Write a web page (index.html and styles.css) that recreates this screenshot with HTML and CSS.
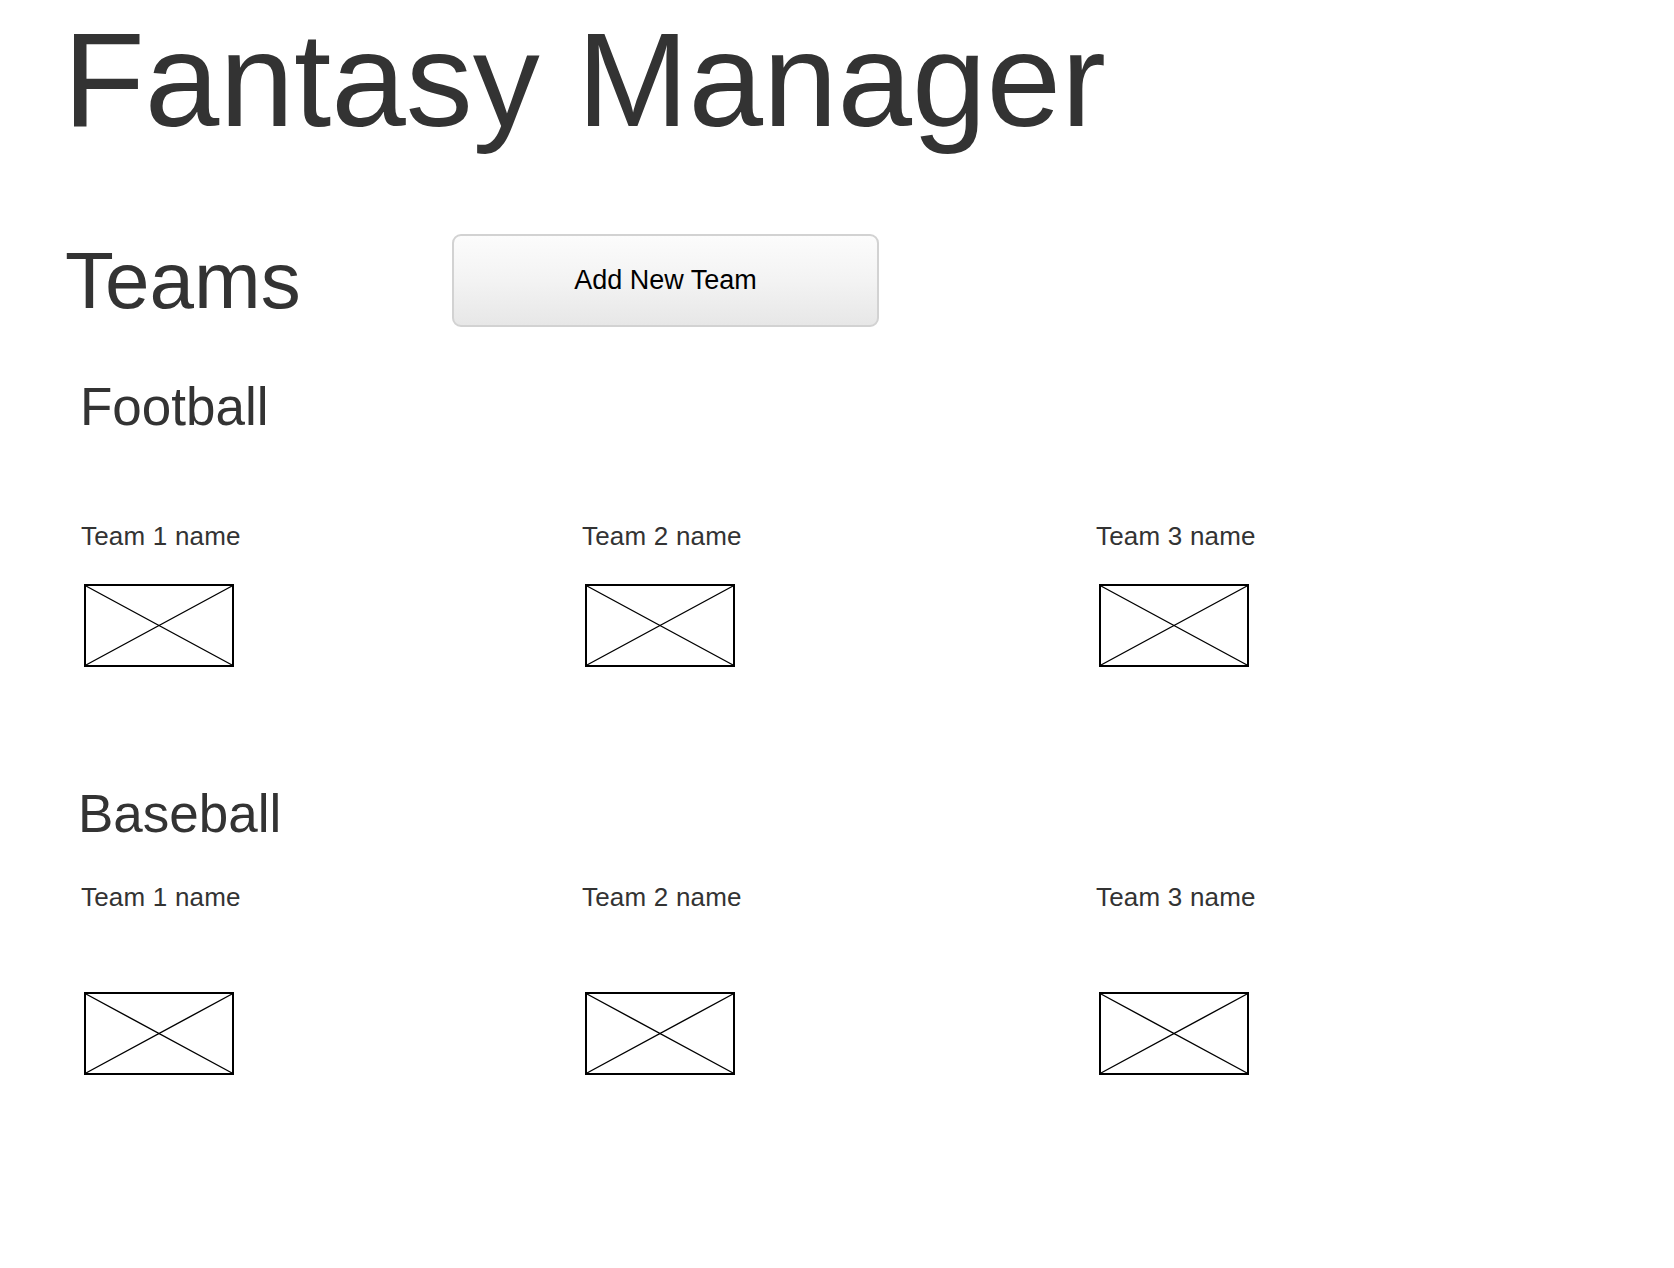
FILE: index.html
```html
<!DOCTYPE html>
<html lang="en">
<head>
<meta charset="utf-8">
<title>Fantasy Manager</title>
<link rel="stylesheet" href="styles.css">
</head>
<body>
<div class="page">
  <h1 class="app-title">Fantasy Manager</h1>

  <div class="teams-bar">
    <h2 class="teams-title">Teams</h2>
    <button class="add-btn" type="button">Add New Team</button>
  </div>

  <section class="sport sport-football">
    <h3 class="sport-title">Football</h3>
    <div class="team-grid">
      <div class="team">
        <div class="team-name">Team 1 name</div>
        <svg class="ph" width="150" height="83" viewBox="0 0 150 83"><rect x="1" y="1" width="148" height="81" fill="#fff" stroke="#000" stroke-width="2"/><path d="M2 2L148 81M148 2L2 81" stroke="#000" stroke-width="1.4" fill="none"/></svg>
      </div>
      <div class="team">
        <div class="team-name">Team 2 name</div>
        <svg class="ph" width="150" height="83" viewBox="0 0 150 83"><rect x="1" y="1" width="148" height="81" fill="#fff" stroke="#000" stroke-width="2"/><path d="M2 2L148 81M148 2L2 81" stroke="#000" stroke-width="1.4" fill="none"/></svg>
      </div>
      <div class="team">
        <div class="team-name">Team 3 name</div>
        <svg class="ph" width="150" height="83" viewBox="0 0 150 83"><rect x="1" y="1" width="148" height="81" fill="#fff" stroke="#000" stroke-width="2"/><path d="M2 2L148 81M148 2L2 81" stroke="#000" stroke-width="1.4" fill="none"/></svg>
      </div>
    </div>
  </section>

  <section class="sport sport-baseball">
    <h3 class="sport-title">Baseball</h3>
    <div class="team-grid">
      <div class="team">
        <div class="team-name">Team 1 name</div>
        <svg class="ph" width="150" height="83" viewBox="0 0 150 83"><rect x="1" y="1" width="148" height="81" fill="#fff" stroke="#000" stroke-width="2"/><path d="M2 2L148 81M148 2L2 81" stroke="#000" stroke-width="1.4" fill="none"/></svg>
      </div>
      <div class="team">
        <div class="team-name">Team 2 name</div>
        <svg class="ph" width="150" height="83" viewBox="0 0 150 83"><rect x="1" y="1" width="148" height="81" fill="#fff" stroke="#000" stroke-width="2"/><path d="M2 2L148 81M148 2L2 81" stroke="#000" stroke-width="1.4" fill="none"/></svg>
      </div>
      <div class="team">
        <div class="team-name">Team 3 name</div>
        <svg class="ph" width="150" height="83" viewBox="0 0 150 83"><rect x="1" y="1" width="148" height="81" fill="#fff" stroke="#000" stroke-width="2"/><path d="M2 2L148 81M148 2L2 81" stroke="#000" stroke-width="1.4" fill="none"/></svg>
      </div>
    </div>
  </section>
</div>
</body>
</html>
```

FILE: styles.css
```css
html, body {
  margin: 0;
  padding: 0;
  background: #ffffff;
}

body {
  font-family: "Liberation Sans", Arial, Helvetica, sans-serif;
  color: #333333;
}

.page {
  padding: 13px 0 0 63px;
}

.app-title {
  margin: 0;
  font-size: 134px;
  line-height: 134px;
  font-weight: normal;
  color: #333333;
}

.teams-bar {
  margin-top: 87px;
  display: flex;
  align-items: center;
  height: 93px;
}

.teams-title {
  margin: 0;
  width: 389px;
  box-sizing: border-box;
  padding-left: 2px;
  flex: none;
  font-size: 80px;
  line-height: 80px;
  font-weight: normal;
  color: #333333;
}

.add-btn {
  flex: none;
  width: 427px;
  height: 93px;
  box-sizing: border-box;
  border: 2px solid #d2d2d2;
  border-radius: 9px;
  background: linear-gradient(to bottom, #fcfcfc 0%, #f3f3f3 50%, #e7e7e7 100%);
  font-family: "Liberation Sans", Arial, Helvetica, sans-serif;
  font-size: 27px;
  color: #000000;
  padding: 0;
  cursor: pointer;
}

.sport {
  padding-left: 15px;
}

.sport-football {
  margin-top: 53px;
}

.sport-football .sport-title {
  padding-left: 2px;
}

.sport-baseball {
  margin-top: 120px;
}

.sport-title {
  margin: 0;
  font-size: 53px;
  line-height: 53px;
  font-weight: normal;
  color: #333333;
}

.team-grid {
  display: grid;
  grid-template-columns: 501px 514px 300px;
  padding-left: 3px;
}

.sport-football .team-grid {
  margin-top: 90px;
}

.sport-baseball .team-grid {
  margin-top: 44px;
}

.team {
  display: flex;
  flex-direction: column;
  align-items: flex-start;
}

.team-name {
  font-size: 26px;
  line-height: 26px;
  letter-spacing: 0.2px;
  color: #333333;
}

.ph {
  display: block;
  margin-left: 3px;
}

.sport-football .ph {
  margin-top: 35px;
}

.sport-baseball .ph {
  margin-top: 82px;
}
```
